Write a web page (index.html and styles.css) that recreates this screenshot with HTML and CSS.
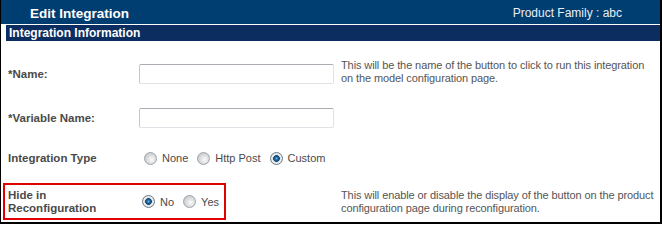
FILE: index.html
```html
<!DOCTYPE html>
<html lang="en">
<head>
    <meta charset="UTF-8">
    <title>Edit Integration</title>
    <link rel="stylesheet" href="styles.css">
</head>
<body>
<div class="panel">
    <div class="panel-head">
        <span class="panel-title">Edit Integration</span>
        <span class="panel-family">Product Family : abc</span>
    </div>
    <div class="section-title">Integration Information</div>

    <div class="form">
        <div class="row row-tall">
            <label class="label" for="name">*Name:</label>
            <div class="field"><input id="name" type="text" class="text-input"></div>
            <div class="help">This will be the name of the button to click to run this integration on the model configuration page.</div>
        </div>
        <div class="row row-tall">
            <label class="label" for="var-name">*Variable Name:</label>
            <div class="field"><input id="var-name" type="text" class="text-input"></div>
        </div>
        <div class="row row-short">
            <div class="label">Integration Type</div>
            <div class="field radios">
                <label class="option"><input type="radio" name="type"> None</label>
                <label class="option"><input type="radio" name="type"> Http Post</label>
                <label class="option"><input type="radio" name="type" checked> Custom</label>
            </div>
        </div>
        <div class="row row-hide">
            <div class="highlight">
                <div class="label label-hide">Hide in<br>Reconfiguration</div>
                <div class="radios">
                    <label class="option"><input type="radio" name="hide" checked> No</label>
                    <label class="option"><input type="radio" name="hide"> Yes</label>
                </div>
            </div>
            <div class="help">This will enable or disable the display of the button on the product configuration page during reconfiguration.</div>
        </div>
    </div>
</div>
</body>
</html>
```

FILE: styles.css
```css
body {
    margin: 0;
    font-family: "Liberation Sans", Arial, sans-serif;
    font-size: 11px;
    background: #fff;
}

.panel {
    width: 659px;
    border-left: 1px solid #000;
    border-right: 2px solid #000;
    border-bottom: 2px solid #000;
    background: #fff;
}

.panel-head {
    display: flex;
    justify-content: space-between;
    height: 21px;
    padding: 3px 38px 0 29px;
    background: #003d70;
    border-bottom: 1px solid #fff;
    color: #fff;
    line-height: 21px;
}

.panel-title {
    font-size: 13.5px;
    font-weight: bold;
}

.panel-family {
    font-size: 12px;
    color: #e8eef5;
}

.section-title {
    margin-left: 5px;
    height: 16px;
    padding-left: 3px;
    background: #0b2d5f;
    color: #fff;
    font-size: 12px;
    font-weight: bold;
    line-height: 16px;
}

.form {
    padding: 11px 0 2px 2px;
}

.row {
    display: flex;
    align-items: center;
}

.row-tall {
    height: 44px;
}

.row-short {
    height: 36px;
}

.row-hide {
    margin-top: 7px;
}

.label {
    width: 131px;
    padding-left: 5px;
    color: #4a4a4a;
    font-size: 11.5px;
    font-weight: bold;
}

.field {
    width: 202px;
}

.text-input {
    box-sizing: border-box;
    width: 195px;
    height: 20px;
    margin: 0;
    border: 1px solid #dfe3e8;
    border-top-color: #a9adb3;
    border-left-color: #c4c8ce;
    border-radius: 2px;
    font: inherit;
}

.help {
    width: 318px;
    margin-top: -4px;
    color: #555;
    line-height: 13px;
    letter-spacing: -0.1px;
}

.radios {
    display: flex;
    gap: 9px;
    padding-left: 5px;
    box-sizing: border-box;
    color: #4a4a4a;
}

.option {
    display: flex;
    align-items: center;
    gap: 5px;
}

.option input {
    appearance: none;
    width: 13px;
    height: 13px;
    margin: 0;
    border: 1px solid #9aa3ab;
    border-radius: 50%;
    background: radial-gradient(circle at 60% 60%, #fbfbfb 0, #e6e6e6 3px, #cfd1d3 6px);
}

.option input:checked {
    border-color: #6f7c88;
    background: radial-gradient(circle at 50% 50%, #67b6e8 0, #1e6fae 1.5px, #0d3d68 3px, #cfd2d6 3.6px, #f3f3f3 4.5px, #d2d4d6 6px);
}

.highlight {
    display: flex;
    align-items: center;
    width: 219px;
    height: 33px;
    border: 2px solid #e10000;
    margin-right: 115px;
}

.label-hide {
    width: 129px;
    padding-left: 3px;
    line-height: 13px;
}

.row-hide .help {
    margin-top: 0;
}
```
